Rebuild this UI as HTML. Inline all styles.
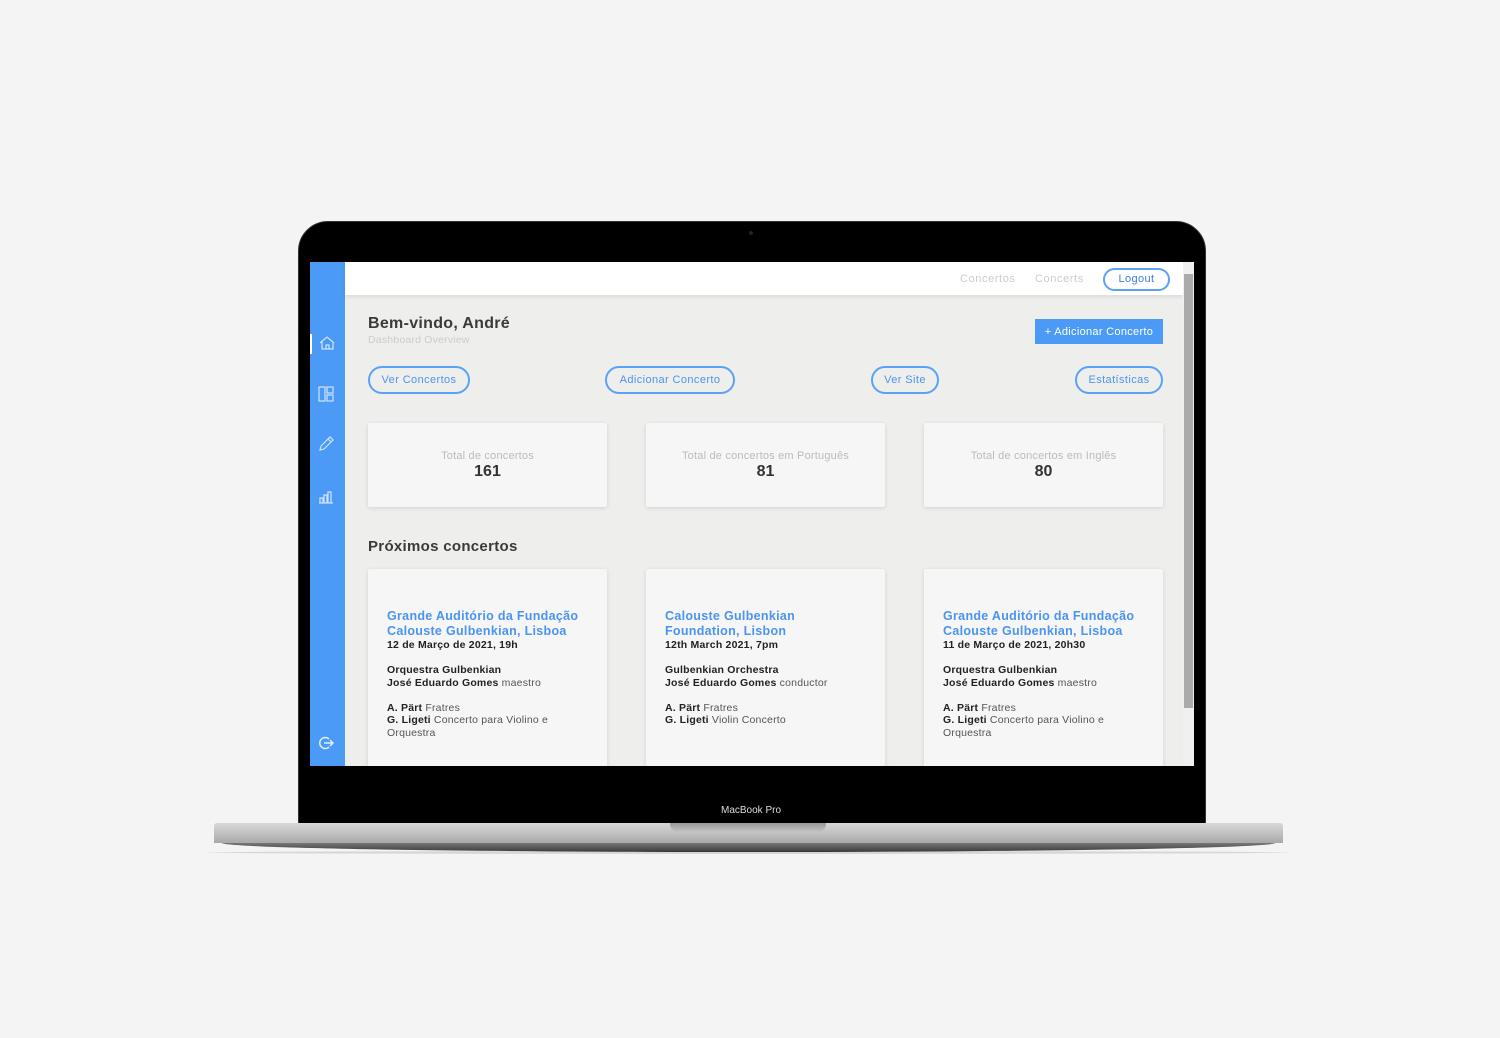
<!DOCTYPE html>
<html><head><meta charset="utf-8"><style>
*{margin:0;padding:0;box-sizing:border-box}
body{width:1500px;height:1038px;background:#f4f4f4;position:relative;overflow:hidden;font-family:"Liberation Sans",sans-serif}
.a{position:absolute}
.lid{left:298px;top:221px;width:908px;height:605px;background:#000;border-radius:30px 30px 0 0;border:1px solid #333}
.screen{left:310px;top:262px;width:884px;height:504px;background:#eeeeec;overflow:hidden}
.side{left:0;top:0;width:35px;height:504px;background:#4b9bf6}
.hdr{left:35px;top:0;width:838px;height:33px;background:#fff;box-shadow:0 2px 4px rgba(0,0,0,.08)}
.sb{left:873px;top:0;width:11px;height:504px;background:#f0f0f0}
.btn{border:2px solid #5aa2f7;border-radius:15px;color:#4b94f0;font-size:11px;letter-spacing:.4px;height:28px;line-height:24px;text-align:center}
.card{background:#f6f6f6;box-shadow:0 1px 4px rgba(0,0,0,.12);border-radius:2px}
.st{color:#bbb;font-size:11px;text-align:center;width:100%;letter-spacing:.2px}
.num{color:#333;font-weight:bold;font-size:16px;text-align:center;width:100%}
.cc{font-size:10.5px;color:#555;line-height:12.5px;letter-spacing:.2px}
.cc .t{color:#4b94f0;font-weight:bold;font-size:12.5px;line-height:15px;letter-spacing:.3px}
.cc b{color:#222}
</style></head><body>
<div class="a lid"></div>
<div class="a" style="left:749px;top:231px;width:4px;height:4px;border-radius:2px;background:#222"></div>
<div class="a screen">
 <div class="a side">
  <div class="a" style="left:0;top:72px;width:2px;height:20px;background:#fff"></div>
  <svg class="a" style="left:8px;top:73px" width="18" height="16" viewBox="0 0 18 16" fill="none" stroke="#cfe3ff" stroke-width="1.2"><path d="M2 8L9 2l7 6M4 7v7h11V7M8 14v-4h3v4"/></svg>
  <svg class="a" style="left:8px;top:124px" width="16" height="16" viewBox="0 0 16 16" fill="none" stroke="#cfe3ff" stroke-width="1.2"><rect x="1" y="1" width="6" height="14"/><rect x="9" y="1" width="6" height="6"/><rect x="9" y="9" width="6" height="6"/></svg>
  <svg class="a" style="left:8px;top:174px" width="16" height="16" viewBox="0 0 16 16" fill="none" stroke="#cfe3ff" stroke-width="1.2"><path d="M2 14l1-4 9-9 3 3-9 9zM10 3l3 3"/></svg>
  <svg class="a" style="left:8px;top:226px" width="16" height="16" viewBox="0 0 16 16" fill="none" stroke="#cfe3ff" stroke-width="1.2"><path d="M1 15h14M2 15V10h3v5M6 15V7h3v8M10 15V4h3v11"/></svg>
  <svg class="a" style="left:8px;top:474px" width="16" height="14" viewBox="0 0 16 14" fill="none" stroke="#e6f0ff" stroke-width="1.4"><path d="M11 3A5.5 5.5 0 1 0 11 11M6 7h9M12 4l3 3-3 3"/></svg>
 </div>
 <div class="a hdr">
  <div class="a" style="left:615px;top:11px;font-size:11px;color:#ccc;letter-spacing:.6px">Concertos</div>
  <div class="a" style="left:690px;top:11px;font-size:11px;color:#ccc;letter-spacing:.6px">Concerts</div>
  <div class="a btn" style="left:758px;top:6px;width:67px;height:23px;line-height:19px;color:#3e7fd6">Logout</div>
 </div>
 <div class="a sb"><div class="a" style="left:1px;top:12px;width:9px;height:434px;background:#aaa"></div></div>
 <div class="a" style="left:58px;top:53px;font-size:16px;font-weight:bold;color:#3a3a3a;letter-spacing:.3px">Bem-vindo, André</div>
 <div class="a" style="left:58px;top:72px;font-size:10.5px;color:#ccc;letter-spacing:.2px">Dashboard Overview</div>
 <div class="a" style="left:725px;top:57px;width:128px;height:25px;background:#4b9bf6;color:#fff;font-size:11px;line-height:27px;text-align:center;letter-spacing:.3px">+ Adicionar Concerto</div>
 <div class="a btn" style="left:58px;top:104px;width:102px">Ver Concertos</div>
 <div class="a btn" style="left:295px;top:104px;width:130px">Adicionar Concerto</div>
 <div class="a btn" style="left:561px;top:104px;width:68px">Ver Site</div>
 <div class="a btn" style="left:765px;top:104px;width:88px">Estatísticas</div>
 <div class="a card" style="left:58px;top:161px;width:239px;height:84px"><div class="a st" style="top:27px">Total de concertos</div><div class="a num" style="top:40px">161</div></div>
 <div class="a card" style="left:336px;top:161px;width:239px;height:84px"><div class="a st" style="top:27px">Total de concertos em Português</div><div class="a num" style="top:40px">81</div></div>
 <div class="a card" style="left:614px;top:161px;width:239px;height:84px"><div class="a st" style="top:27px">Total de concertos em Inglês</div><div class="a num" style="top:40px">80</div></div>
 <div class="a" style="left:58px;top:276px;font-size:15px;font-weight:bold;color:#3a3a3a;letter-spacing:.3px">Próximos concertos</div>
 <div class="a card cc" style="left:58px;top:307px;width:239px;height:220px;padding:40px 0 0 19px">
  <div class="t">Grande Auditório da Fundação<br>Calouste Gulbenkian, Lisboa</div><b>12 de Março de 2021, 19h</b><br><br><b>Orquestra Gulbenkian</b><br><b>José Eduardo Gomes</b> maestro<br><br><b>A. Pärt</b> Fratres<br><b>G. Ligeti</b> Concerto para Violino e<br>Orquestra</div>
 <div class="a card cc" style="left:336px;top:307px;width:239px;height:220px;padding:40px 0 0 19px">
  <div class="t">Calouste Gulbenkian<br>Foundation, Lisbon</div><b>12th March 2021, 7pm</b><br><br><b>Gulbenkian Orchestra</b><br><b>José Eduardo Gomes</b> conductor<br><br><b>A. Pärt</b> Fratres<br><b>G. Ligeti</b> Violin Concerto</div>
 <div class="a card cc" style="left:614px;top:307px;width:239px;height:220px;padding:40px 0 0 19px">
  <div class="t">Grande Auditório da Fundação<br>Calouste Gulbenkian, Lisboa</div><b>11 de Março de 2021, 20h30</b><br><br><b>Orquestra Gulbenkian</b><br><b>José Eduardo Gomes</b> maestro<br><br><b>A. Pärt</b> Fratres<br><b>G. Ligeti</b> Concerto para Violino e<br>Orquestra</div>
</div>
<div class="a" style="left:721px;top:805px;font-size:10px;color:#ddd">MacBook Pro</div>
<div class="a" style="left:214px;top:823px;width:1069px;height:20px;background:linear-gradient(#d8d8d8,#bdbdbd 60%,#a8a8a8);border-radius:3px 3px 0 0"></div>
<div class="a" style="left:670px;top:823px;width:156px;height:9px;background:linear-gradient(#999,#c4c4c4);border-radius:0 0 8px 8px"></div>
<div class="a" style="left:222px;top:843px;width:1053px;height:9px;background:linear-gradient(#777,#3a3a3a);border-radius:0 0 50% 50%/0 0 100% 100%"></div>
<div class="a" style="left:205px;top:851px;width:1085px;height:3px;background:rgba(0,0,0,.12);border-radius:50%"></div>
</body></html>
